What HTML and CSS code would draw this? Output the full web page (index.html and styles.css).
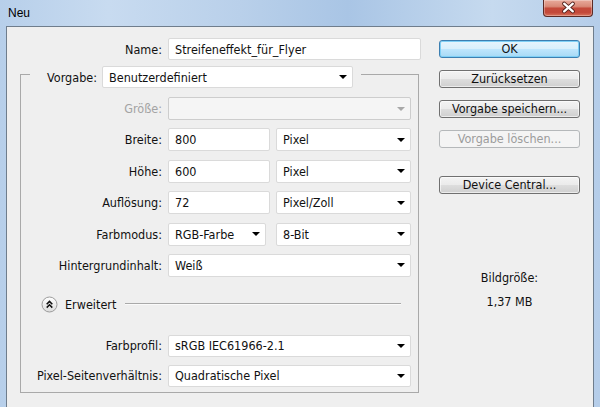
FILE: index.html
```html
<!DOCTYPE html>
<html lang="de">
<head>
<meta charset="utf-8">
<title>Neu</title>
<link rel="stylesheet" href="styles.css">
</head>
<body>
<div class="window">
  <div class="titlebar">
    <span class="title">Neu</span>
    <div class="close">
      <svg width="50" height="16" viewBox="0 0 50 16">
        <path d="M21 3.5 L30 11.5 M30 3.5 L21 11.5" stroke="#4d1d17" stroke-width="4.2" stroke-linecap="round" fill="none"/>
        <path d="M21 3.5 L30 11.5 M30 3.5 L21 11.5" stroke="#ffffff" stroke-width="2.4" stroke-linecap="round" fill="none"/>
      </svg>
    </div>
  </div>
  <div class="frame">
    <div class="client">
      <div class="left">
        <div class="name-row">
          <span class="lbl name-lbl">Name:</span>
          <div class="field w-name">Streifeneffekt_für_Flyer</div>
        </div>
        <fieldset class="group">
          <legend class="legend">
            <div class="legend-inner">
              <span class="lbl legend-lbl">Vorgabe:</span>
              <div class="field select w-preset">Benutzerdefiniert<span class="arrow"></span></div>
            </div>
          </legend>
          <div class="rows">
            <div class="row">
              <span class="lbl disabled-lbl">Größe:</span>
              <div class="field select disabled w-full"><span class="arrow"></span></div>
            </div>
            <div class="row">
              <span class="lbl">Breite:</span>
              <div class="field w-num">800</div>
              <div class="field select w-unit">Pixel<span class="arrow"></span></div>
            </div>
            <div class="row">
              <span class="lbl">Höhe:</span>
              <div class="field w-num">600</div>
              <div class="field select w-unit">Pixel<span class="arrow"></span></div>
            </div>
            <div class="row">
              <span class="lbl">Auflösung:</span>
              <div class="field w-num">72</div>
              <div class="field select w-unit">Pixel/Zoll<span class="arrow"></span></div>
            </div>
            <div class="row">
              <span class="lbl">Farbmodus:</span>
              <div class="field select w-mode">RGB-Farbe<span class="arrow"></span></div>
              <div class="field select w-unit w-unit-gap">8-Bit<span class="arrow"></span></div>
            </div>
            <div class="row">
              <span class="lbl">Hintergrundinhalt:</span>
              <div class="field select w-full">Weiß<span class="arrow"></span></div>
            </div>
          </div>
          <div class="adv">
            <svg class="adv-icon" width="17" height="17" viewBox="0 0 17 17">
              <defs>
                <linearGradient id="advg" x1="0" y1="0" x2="0" y2="1">
                  <stop offset="0" stop-color="#ffffff"/>
                  <stop offset="1" stop-color="#dcdcdc"/>
                </linearGradient>
              </defs>
              <circle cx="8.5" cy="8.5" r="7.5" fill="url(#advg)" stroke="#9c9c9c" stroke-width="1"/>
              <path d="M5.7 8.2 L8.5 5.4 L11.3 8.2 M5.7 11.6 L8.5 8.8 L11.3 11.6" stroke="#111" stroke-width="1.6" fill="none"/>
            </svg>
            <span class="adv-text">Erweitert</span>
            <span class="adv-line"></span>
          </div>
          <div class="rows rows2">
            <div class="row row22">
              <span class="lbl">Farbprofil:</span>
              <div class="field select w-full">sRGB IEC61966-2.1<span class="arrow"></span></div>
            </div>
            <div class="row row22">
              <span class="lbl">Pixel-Seitenverhältnis:</span>
              <div class="field select w-full">Quadratische Pixel<span class="arrow"></span></div>
            </div>
          </div>
        </fieldset>
      </div>
      <div class="right">
        <div class="btn btn-default">OK</div>
        <div class="btn">Zurücksetzen</div>
        <div class="btn">Vorgabe speichern...</div>
        <div class="btn btn-disabled">Vorgabe löschen...</div>
        <div class="btn btn-dc">Device Central...</div>
        <div class="info">
          <div class="info-lbl">Bildgröße:</div>
          <div class="info-val">1,37 MB</div>
        </div>
      </div>
    </div>
  </div>
</div>
</body>
</html>
```

FILE: styles.css
```css
* { box-sizing: border-box; }

html, body { margin: 0; padding: 0; }

body {
  width: 600px;
  height: 407px;
  overflow: hidden;
  font-family: "DejaVu Sans Condensed", "Liberation Sans", Arial, sans-serif;
  font-size: 12.5px;
  color: #111;
  background: #b3cdea;
}

.window {
  display: flex;
  flex-direction: column;
  height: 407px;
  background: linear-gradient(to right, #b7cfea 0%, #c8dbf0 18%, #b9d0ea 40%, #a9c5e5 58%, #c6daef 82%, #b5cde9 100%);
}

.titlebar {
  height: 26px;
  flex: none;
  display: flex;
  align-items: flex-start;
  justify-content: space-between;
  padding: 0 7px 0 8px;
}

.title {
  margin-top: 6px;
  font-family: "Liberation Sans", Arial, sans-serif;
  font-size: 12px;
  line-height: 14px;
  color: #000;
}

.close {
  width: 50px;
  height: 17px;
  border: 1px solid #5b2a25;
  border-top: none;
  border-radius: 0 0 4px 4px;
  background: linear-gradient(#e8aa9b 0%, #d98a78 40%, #c44a3a 52%, #c3493a 78%, #d8735c 100%);
  box-shadow: inset 0 0 0 1px rgba(255, 255, 255, 0.3);
  display: flex;
  align-items: center;
  justify-content: center;
}

.close svg { display: block; }

.frame {
  flex: 1;
  display: flex;
  padding: 0 6px;
}

.client {
  flex: 1;
  background: #efefef;
  border: 1px solid #6f7d8c;
  border-bottom: none;
  display: flex;
  align-items: flex-start;
}

/* left form column */
.left {
  width: 414px;
  flex: none;
  display: flex;
  flex-direction: column;
}

.lbl { white-space: nowrap; }

.name-row {
  display: flex;
  align-items: center;
  margin-top: 11px;
}

.name-lbl {
  width: 155px;
  text-align: right;
  margin-right: 6px;
}

.field {
  height: 22px;
  background: #fff;
  border: 1px solid #dadada;
  border-radius: 2px;
  padding: 0 6px;
  display: flex;
  align-items: center;
  white-space: nowrap;
  color: #111;
}

.arrow {
  margin-left: auto;
  margin-right: -1px;
  width: 0;
  height: 0;
  border-left: 4px solid transparent;
  border-right: 4px solid transparent;
  border-top: 4px solid #000;
}

.w-name { width: 253px; }

.group {
  margin: 0 0 0 13px;
  padding: 0 0 5px 0;
  border: 1px solid #a9a9a9;
  width: 399px;
  min-width: 0;
}

.legend {
  margin-left: 9px;
  padding: 6px 8px 0 13px;
}

.legend-inner {
  display: flex;
  align-items: center;
}

.legend-lbl {
  width: 54px;
  text-align: right;
  margin-right: 5px;
}

.w-preset { width: 251px; }

.rows {
  display: flex;
  flex-direction: column;
  gap: 8.4px;
  margin-top: 9px;
}

.row {
  display: flex;
  align-items: center;
  height: 23px;
}

.row .lbl {
  width: 141px;
  text-align: right;
  margin-right: 6px;
}

.row .field { height: 23px; }

.row22, .row22 .field { height: 22px; }

.disabled-lbl { color: #a3a3a3; }

.field.disabled {
  background: #f5f5f5;
  border-color: #cdcdcd;
}

.field.disabled .arrow { border-top-color: #a8a8a8; }

.w-full { width: 243px; }
.w-num { width: 102px; }
.w-unit { width: 135px; margin-left: 6px; }
.w-mode { width: 98px; }
.w-unit-gap { margin-left: 10px; }

.adv {
  display: flex;
  align-items: center;
  height: 17px;
  margin: 19px 17px 0 20px;
}

.adv-icon { display: block; flex: none; }

.adv-text { margin-left: 7px; }

.adv-line {
  flex: 1;
  margin-left: 9px;
  border-top: 1px solid #a9a9a9;
  border-bottom: 1px solid #fafafa;
}

.rows2 {
  margin-top: 22px;
  gap: 8px;
}

/* right button column */
.right {
  width: 141px;
  flex: none;
  margin-left: 18px;
  display: flex;
  flex-direction: column;
}

.btn {
  height: 18px;
  margin-top: 12px;
  border: 1px solid #707070;
  border-radius: 3px;
  background: linear-gradient(#f3f3f3 0%, #ebebeb 48%, #dddddd 52%, #cfcfcf 100%);
  box-shadow: inset 0 0 0 1px rgba(255, 255, 255, 0.6);
  text-align: center;
  line-height: 16px;
  color: #111;
  white-space: nowrap;
}

.btn-default {
  margin-top: 13px;
  border-color: #3c7fb1;
  background: linear-gradient(#e6f5fd 0%, #d9f0fc 48%, #bee6fd 52%, #a7d9f5 100%);
  box-shadow: inset 0 0 0 1px #7fd0f6;
}

.btn-disabled {
  border-color: #b5b8ba;
  background: #f4f4f4;
  box-shadow: none;
  color: #9c9c9c;
}

.btn-dc { margin-top: 28px; }

.info {
  margin-top: 76px;
  text-align: center;
  line-height: 16px;
  color: #111;
}

.info-val { margin-top: 8px; }
```
